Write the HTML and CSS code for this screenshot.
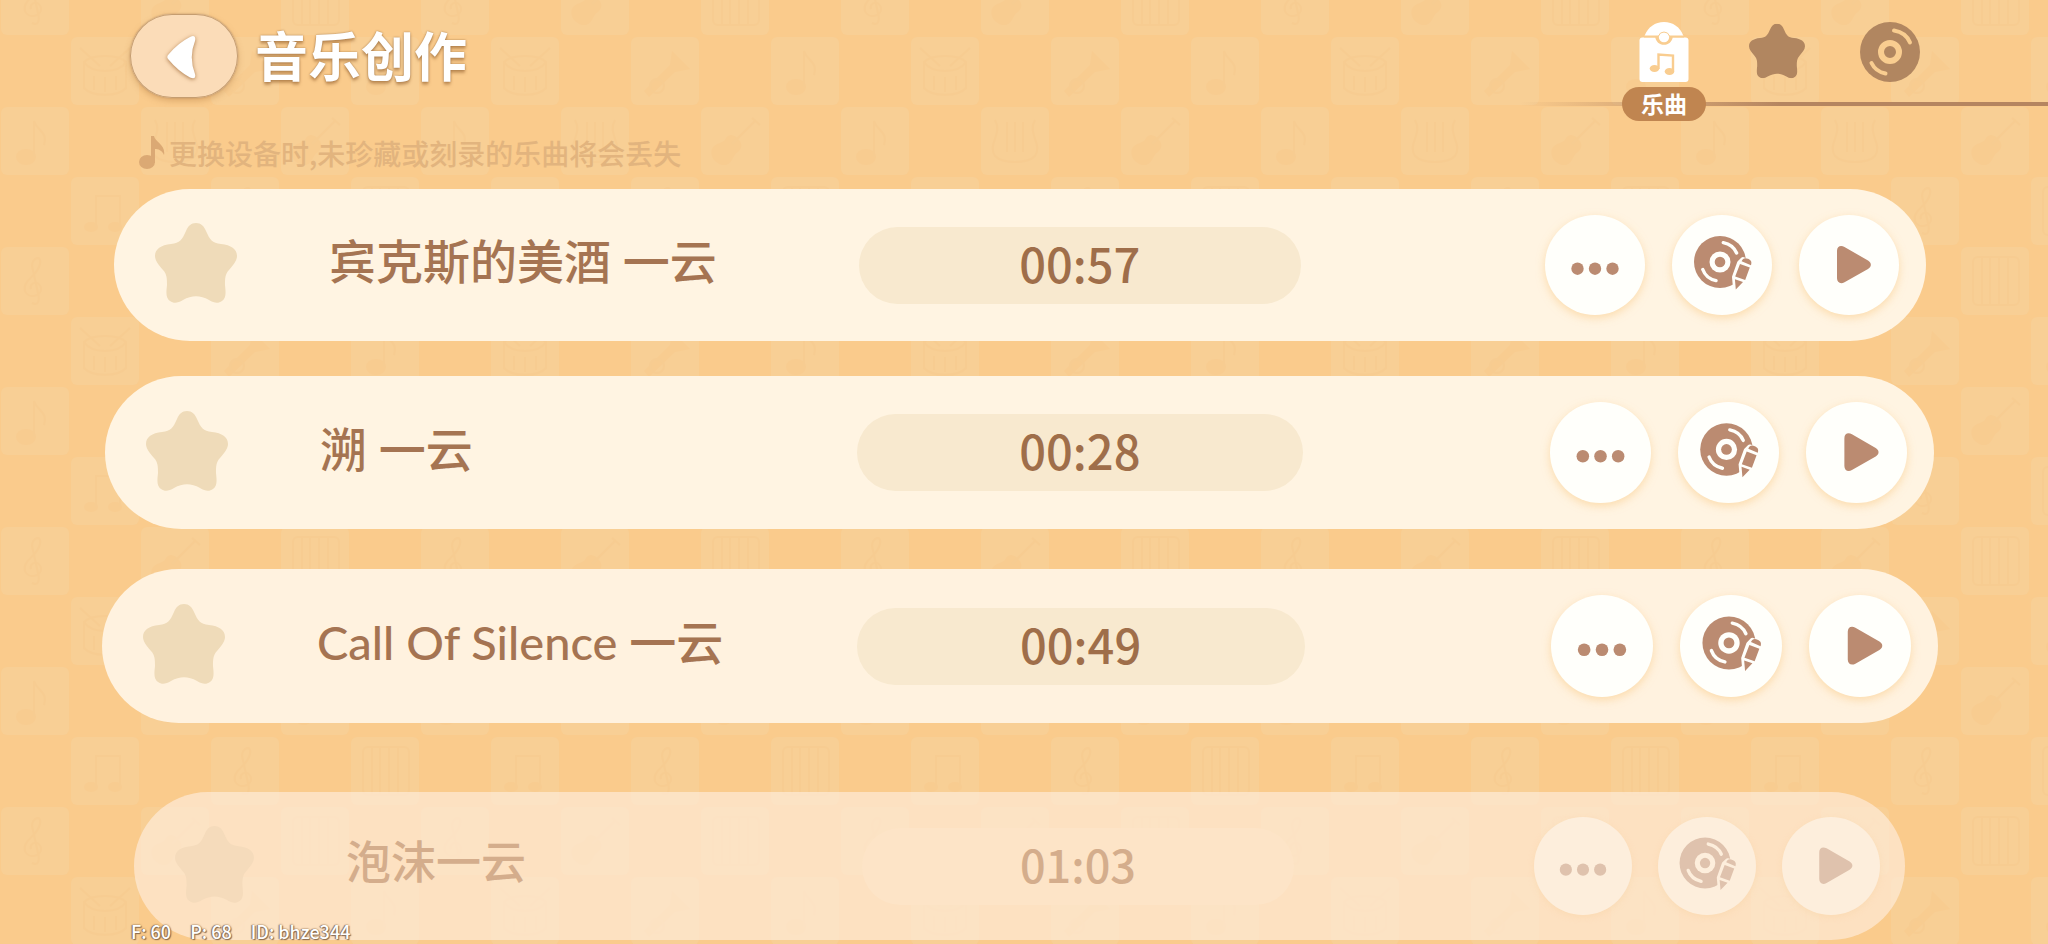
FILE: index.html
```html
<!DOCTYPE html>
<html lang="zh-CN">
<head>
<meta charset="utf-8">
<meta name="viewport" content="width=device-width, initial-scale=1">
<title>音乐创作</title>
<link rel="stylesheet" href="styles.css">
</head>
<body>
<svg class="backdrop" aria-hidden="true">
  <defs>
    <g id="cell"><rect x="1" y="1" width="68" height="68" rx="6"/></g>
    <g id="bg-note"><ellipse class="mark" cx="26" cy="51" rx="10" ry="8"/><path class="mark-line" d="M34 51V15c3 10 14 10 10 24"/></g>
    <g id="bg-beam"><ellipse class="mark" cx="21" cy="51" rx="7" ry="5"/><ellipse class="mark" cx="45" cy="51" rx="7" ry="5"/><path class="mark-line" d="M26 51V20h24v31"/></g>
    <g id="bg-treble"><path class="mark-line" d="M32 57c6 3 8-2 6-10l-6-27c0-8 10-12 8-2-2 12-18 16-15 27 3 8 17 6 16-3-2-8-12-6-10 1"/></g>
    <g id="bg-piano"><rect class="mark-line" x="13" y="11" width="46" height="48" rx="5"/><path class="mark-line" d="M22 12v46M30 12v46M39 12v46M48 12v46"/></g>
    <g id="bg-drum"><path class="mark-line" d="M10 12l20 18M60 12L40 30M14 26c8 12 34 12 42 0M14 26c8-8 34-8 42 0v26c-8 9-34 9-42 0zM24 40v14M35 41v15M46 40v14"/></g>
    <g id="bg-horn"><path class="mark" d="M14 55l26-26 2-14 18 18-15 3-26 25z"/><circle class="mark-line" cx="27" cy="50" r="7"/></g>
    <g id="bg-lyre"><path class="mark-line" d="M15 14c8 14-8 24 0 36 8 8 32 8 40 0 8-12-8-22 0-36M27 16v30M35 16v30M43 16v30"/></g>
    <g id="bg-guitar"><path class="mark" d="M12 43c3-7 12-5 14-11 4-6 10-2 12 1 4 4 5 8 0 13-6 3-4 10-12 13-9 1-17-8-14-16z"/><path class="mark-line" d="M32 38l24-24M52 12l8 7"/></g>
    <pattern id="checker" width="420" height="280" patternUnits="userSpaceOnUse" y="-34">
      <rect class="base" width="420" height="280"/>
      <g class="light">
        <use href="#cell"/><use href="#cell" x="140"/><use href="#cell" x="280"/>
        <use href="#cell" x="70" y="70"/><use href="#cell" x="210" y="70"/><use href="#cell" x="350" y="70"/>
        <use href="#cell" y="140"/><use href="#cell" x="140" y="140"/><use href="#cell" x="280" y="140"/>
        <use href="#cell" x="70" y="210"/><use href="#cell" x="210" y="210"/><use href="#cell" x="350" y="210"/>
      </g>
      <use href="#bg-treble"/><use href="#bg-guitar" x="140"/><use href="#bg-piano" x="280"/>
      <use href="#bg-drum" x="70" y="70"/><use href="#bg-horn" x="210" y="70"/><use href="#bg-note" x="350" y="70"/>
      <use href="#bg-note" y="140"/><use href="#bg-lyre" x="140" y="140"/><use href="#bg-guitar" x="280" y="140"/>
      <use href="#bg-beam" x="70" y="210"/><use href="#bg-treble" x="210" y="210"/><use href="#bg-piano" x="350" y="210"/>
    </pattern>
    <symbol id="i-star" viewBox="0 0 82 80"><path d="M41 0C46 0 49 3 51 8C55 17 57 20 66 21C76 22 82 26 82 33C82 38 78 42 74 47C70 51 70 56 70 62C71 71 71 75 67 78C63 81 59 80 54 77C45 72 37 72 28 77C23 80 19 81 15 78C11 75 11 71 12 62C12 56 12 51 8 47C4 42 0 38 0 33C0 26 6 22 16 21C25 20 27 17 31 8C33 3 36 0 41 0Z"/></symbol>
    <symbol id="i-more" viewBox="0 0 100 100"><circle cx="32.5" cy="53.7" r="6.2"/><circle cx="50" cy="53.7" r="6.2"/><circle cx="67.5" cy="53.7" r="6.2"/></symbol>
    <symbol id="i-burn" viewBox="0 0 100 100">
      <circle cx="48" cy="47" r="26"/>
      <circle class="face" cx="48" cy="47" r="10.5"/>
      <circle cx="48" cy="47" r="5.3"/>
      <path class="groove" d="M51.3 27.6Q61 29.5 64.6 38M30.8 54.5Q34 63.5 44 65.6"/>
      <path class="halo" d="M71 44.5L78 47L72.5 66L63.500 73L62.500 62L67.500 48Z"/>
      <path d="M69.6 46.2C70.8 43.2 73 42.4 76 43.8C79.2 45.2 80 47 79 50.2ZM68 48.9L77.8 52.6L73.2 65L63.2 61.6ZM62.9 64.2L71 67L63.8 74.6Z"/>
    </symbol>
    <symbol id="i-play" viewBox="0 0 100 100"><path d="M38 36C38 31.5 41.5 29.8 45.5 32L69 45.5C72.8 47.8 72.8 51.6 69 53.9L45.5 67.3C41.5 69.6 38 67.5 38 63.3Z"/></symbol>
  </defs>
  <rect width="100%" height="100%" fill="url(#checker)"/>
</svg>

<header class="topbar">
  <div class="heading">
    <button class="back" type="button" aria-label="返回">
      <svg viewBox="0 0 108 84" aria-hidden="true"><path d="M38.5 40.5Q36 43 38.5 45.5Q48 57 60 63.5Q66.5 66 65 60Q58.5 43 65 27Q66.5 20 60 23Q48 29 38.5 40.5Z"/></svg>
    </button>
    <h1>音乐创作</h1>
  </div>
  <nav class="tabs" aria-label="分类">
    <button class="tab tab-active" type="button" aria-current="page">
      <svg viewBox="0 0 60 60" aria-hidden="true">
        <path d="M10.5 14C14 5 21 0 30 0C39 0 46 5 49.5 14Z"/>
        <rect x="5.5" y="15.5" width="49" height="44.5" rx="3"/>
        <path class="cut" d="M10 13.5H50V15.500H38.700C38 19.500 34.800 22.800 30 22.800C25.200 22.800 22 19.500 21.300 15.500H10Z"/>
        <circle cx="30" cy="15" r="5.2"/><path class="cut-ring" d="M24.500 14A5.800 5.800 0 0 1 35.500 14"/>
        <path class="cut-line" d="M24.500 47V32.500L39 33.500V49"/>
        <ellipse class="cut" cx="20.5" cy="46.5" rx="4.800" ry="3.500"/><ellipse class="cut" cx="35.500" cy="49.5" rx="4.800" ry="3.500"/>
      </svg>
      <span>乐曲</span>
    </button>
    <button class="tab" type="button" aria-label="珍藏"><svg class="tab-star" viewBox="0 0 82 80" aria-hidden="true"><use href="#i-star"/></svg></button>
    <button class="tab" type="button" aria-label="刻录">
      <svg viewBox="0 0 60 60" aria-hidden="true">
        <circle cx="30" cy="30" r="30"/>
        <circle class="disc-ring" cx="30" cy="30" r="9"/>
        <path class="disc-groove" d="M34 8.5Q46 10.5 50 20.5M11.5 41Q15.5 49.5 25.5 51.5"/>
      </svg>
    </button>
  </nav>
</header>

<main>
  <p class="hint">
    <svg viewBox="0 0 26 34" aria-hidden="true"><ellipse cx="8" cy="26" rx="8" ry="7"/><path d="M12 0H15C16 6 27 9 25 19C23 14 19 13 16 13V27H12Z"/></svg>
    更换设备时,未珍藏或刻录的乐曲将会丢失
  </p>
  <ul class="songs">
    <li class="song song-first">
      <div class="lead"><button class="fav" type="button" aria-label="珍藏"><svg aria-hidden="true"><use href="#i-star"/></svg></button><h2>宾克斯的美酒 一云</h2></div>
      <time class="length">00:57</time>
      <div class="actions">
        <button type="button" aria-label="更多"><svg aria-hidden="true"><use href="#i-more"/></svg></button>
        <button type="button" aria-label="刻录"><svg aria-hidden="true"><use href="#i-burn"/></svg></button>
        <button type="button" aria-label="播放"><svg aria-hidden="true"><use href="#i-play"/></svg></button>
      </div>
    </li>
    <li class="song song-second">
      <div class="lead"><button class="fav" type="button" aria-label="珍藏"><svg aria-hidden="true"><use href="#i-star"/></svg></button><h2>溯 一云</h2></div>
      <time class="length">00:28</time>
      <div class="actions">
        <button type="button" aria-label="更多"><svg aria-hidden="true"><use href="#i-more"/></svg></button>
        <button type="button" aria-label="刻录"><svg aria-hidden="true"><use href="#i-burn"/></svg></button>
        <button type="button" aria-label="播放"><svg aria-hidden="true"><use href="#i-play"/></svg></button>
      </div>
    </li>
    <li class="song song-third">
      <div class="lead"><button class="fav" type="button" aria-label="珍藏"><svg aria-hidden="true"><use href="#i-star"/></svg></button><h2>Call Of Silence 一云</h2></div>
      <time class="length">00:49</time>
      <div class="actions">
        <button type="button" aria-label="更多"><svg aria-hidden="true"><use href="#i-more"/></svg></button>
        <button type="button" aria-label="刻录"><svg aria-hidden="true"><use href="#i-burn"/></svg></button>
        <button type="button" aria-label="播放"><svg aria-hidden="true"><use href="#i-play"/></svg></button>
      </div>
    </li>
    <li class="song song-fading">
      <div class="lead"><button class="fav" type="button" aria-label="珍藏"><svg aria-hidden="true"><use href="#i-star"/></svg></button><h2>泡沫一云</h2></div>
      <time class="length">01:03</time>
      <div class="actions">
        <button type="button" aria-label="更多"><svg aria-hidden="true"><use href="#i-more"/></svg></button>
        <button type="button" aria-label="刻录"><svg aria-hidden="true"><use href="#i-burn"/></svg></button>
        <button type="button" aria-label="播放"><svg aria-hidden="true"><use href="#i-play"/></svg></button>
      </div>
    </li>
  </ul>
</main>

<footer class="status"><span>F: 60</span><span>P: 68</span><span>ID: bhze344</span></footer>
</body>
</html>
```
FILE: styles.css
```css
* { box-sizing: border-box; }

body {
  margin: 0;
  min-height: 100vh;
  overflow: hidden;
  position: relative;
  background: #facb8c;
  color: #a57452;
  font-family: "Noto Sans CJK SC", "Noto Sans", sans-serif;
}

h1, h2, p, ul { margin: 0; padding: 0; }

button {
  padding: 0;
  border: 0;
  background: none;
  color: inherit;
  font: inherit;
  cursor: pointer;
}

svg { display: block; fill: currentColor; }

/* Checkered wallpaper */
.backdrop {
  position: absolute;
  inset: 0;
  z-index: -1;
  width: 100%;
  height: 100%;
}
.base { fill: #facb8c; }
.light { fill: #f8cf95; }
.mark { fill: #f8cc90; }
.mark-line { fill: none; stroke: #f7cc91; stroke-width: 2; }

/* Top bar */
.topbar {
  display: flex;
  justify-content: space-between;
  align-items: flex-start;
  padding-left: 130px;
}
.heading {
  display: flex;
  align-items: center;
  gap: 17px;
  padding-top: 14px;
}
.back {
  width: 108px;
  height: 84px;
  border-radius: 42px;
  background: #fbdcb8;
  box-shadow: 0 0 0 1px #c59d70 inset, 0 0 2px #b98f63, 0 3px 6px rgba(170, 110, 50, 0.35);
  color: #fff;
}
.back svg { filter: drop-shadow(0 1px 2px rgba(150, 95, 45, 0.8)); }
h1 {
  padding-bottom: 4px;
  color: #fff;
  font-size: 53px;
  font-weight: 700;
  line-height: 80px;
  text-shadow: 0 0 2px rgba(140, 95, 50, 0.8), 0 3px 3px rgba(150, 95, 45, 0.5);
}

.tabs {
  position: relative;
  display: flex;
  gap: 29px;
  padding: 22px 116px 0 102px;
}
.tabs::before {
  content: "";
  position: absolute;
  top: 102px;
  left: 0;
  right: 0;
  height: 4px;
  background: linear-gradient(90deg, rgba(181, 133, 96, 0), #b58560 260px);
}
.tab {
  position: relative;
  display: flex;
  flex-direction: column;
  align-items: center;
  gap: 5px;
  width: 84px;
  height: 99px;
  color: #b18660;
}
.tab svg { width: 60px; height: 60px; }
.tab .tab-star { width: 56px; height: 58px; }
.tab-active { color: #fff; }
.tab span {
  width: 100%;
  padding-bottom: 2px;
  border-radius: 17px;
  background: #c08550;
  font-size: 23px;
  font-weight: 700;
  line-height: 32px;
}
.cut { fill: #f9cd90; }
.cut-line { fill: none; stroke: #f9cd90; stroke-width: 2.4; }
.cut-ring { fill: none; stroke: #f9cd90; stroke-width: 1; }
.disc-ring { fill: none; stroke: #f9cd90; stroke-width: 6; }
.disc-groove { fill: none; stroke: #f9cd90; stroke-width: 4; stroke-linecap: round; }

.hint {
  display: flex;
  align-items: center;
  gap: 4px;
  padding: 15px 139px 19px;
  color: #e2b47e;
  font-size: 28px;
  font-weight: 500;
  line-height: 34px;
}
.hint svg { width: 26px; height: 34px; color: #dba974; }

/* Song list */
.songs { list-style: none; }
.song {
  display: grid;
  grid-template-columns: 411fr 244fr 345fr;
  align-items: center;
  padding: 26px 0;
  border-radius: 80px;
  background: #fff4e2;
}
.song-first { --disc: 100px; margin: 0 122px 35px 114px; }
.song-second { --disc: 101px; margin: 0 114px 40px 105px; }
.song-third { --disc: 102px; margin: 0 110px 69px 102px; background: #fff2df; }
.song-fading { --disc: 98px; margin: 0 143px 0 134px; padding: 25px 0; background: rgba(255, 240, 228, 0.6); }

.lead {
  display: flex;
  align-items: center;
  gap: 92px;
  padding: 0 0 4px 41px;
}
.fav { color: #efdbb9; }
.fav svg { width: 82px; height: 80px; }
h2 {
  padding-bottom: 4px;
  font-family: Lato, "Noto Sans CJK SC", sans-serif;
  font-size: 47px;
  font-weight: 500;
  line-height: 60px;
  white-space: nowrap;
}
.length {
  padding-bottom: 5px;
  border-radius: 39px;
  background: #f8e9cf;
  color: #9f6e4a;
  font-size: 47px;
  font-weight: 500;
  line-height: 72px;
  text-align: center;
}
.actions {
  display: flex;
  justify-content: flex-end;
  gap: 27px;
  padding-right: 27px;
}
.actions button {
  width: var(--disc);
  height: var(--disc);
  border-radius: 50%;
  background: #fffffb;
  box-shadow: 0 3px 8px rgba(250, 200, 130, 0.55);
  color: #bb8b71;
}
.actions svg { width: 100%; height: 100%; }
.face { fill: #fffffb; }
.groove { fill: none; stroke: #fffffb; stroke-width: 3.4; stroke-linecap: round; }
.halo { fill: #fffffb; stroke: #fffffb; stroke-width: 5; stroke-linejoin: round; }

.song-fading h2 { color: #d4ad8c; font-size: 45px; }
.song-fading .fav { color: #f5dbbb; }
.song-fading .fav svg { width: 79px; height: 77px; }
.song-fading .length { background: #fde4c7; color: #d4ad8c; font-size: 45px; }
.song-fading .actions { gap: 26px; padding-right: 25px; }
.song-fading .actions button {
  background: #fdeedc;
  box-shadow: 0 2px 6px rgba(250, 210, 160, 0.4);
  color: #dfc2ad;
  /* custom paint for the icon's knocked-out parts */
  --paper: #fdeedc;
}
.face { fill: var(--paper, #fffffb); }
.groove { stroke: var(--paper, #fffffb); }
.halo { fill: var(--paper, #fffffb); stroke: var(--paper, #fffffb); }

/* Frame rate and player id, drawn over the list */
.status {
  position: absolute;
  left: 131px;
  bottom: 0;
  display: flex;
  gap: 19px;
  color: #fff;
  font-size: 18px;
  font-weight: 500;
  line-height: 25px;
  text-shadow: 0 0 2px #8a6a4c, 1px 1px 1px #8a6a4c, -1px 0 1px #8a6a4c;
}
```
